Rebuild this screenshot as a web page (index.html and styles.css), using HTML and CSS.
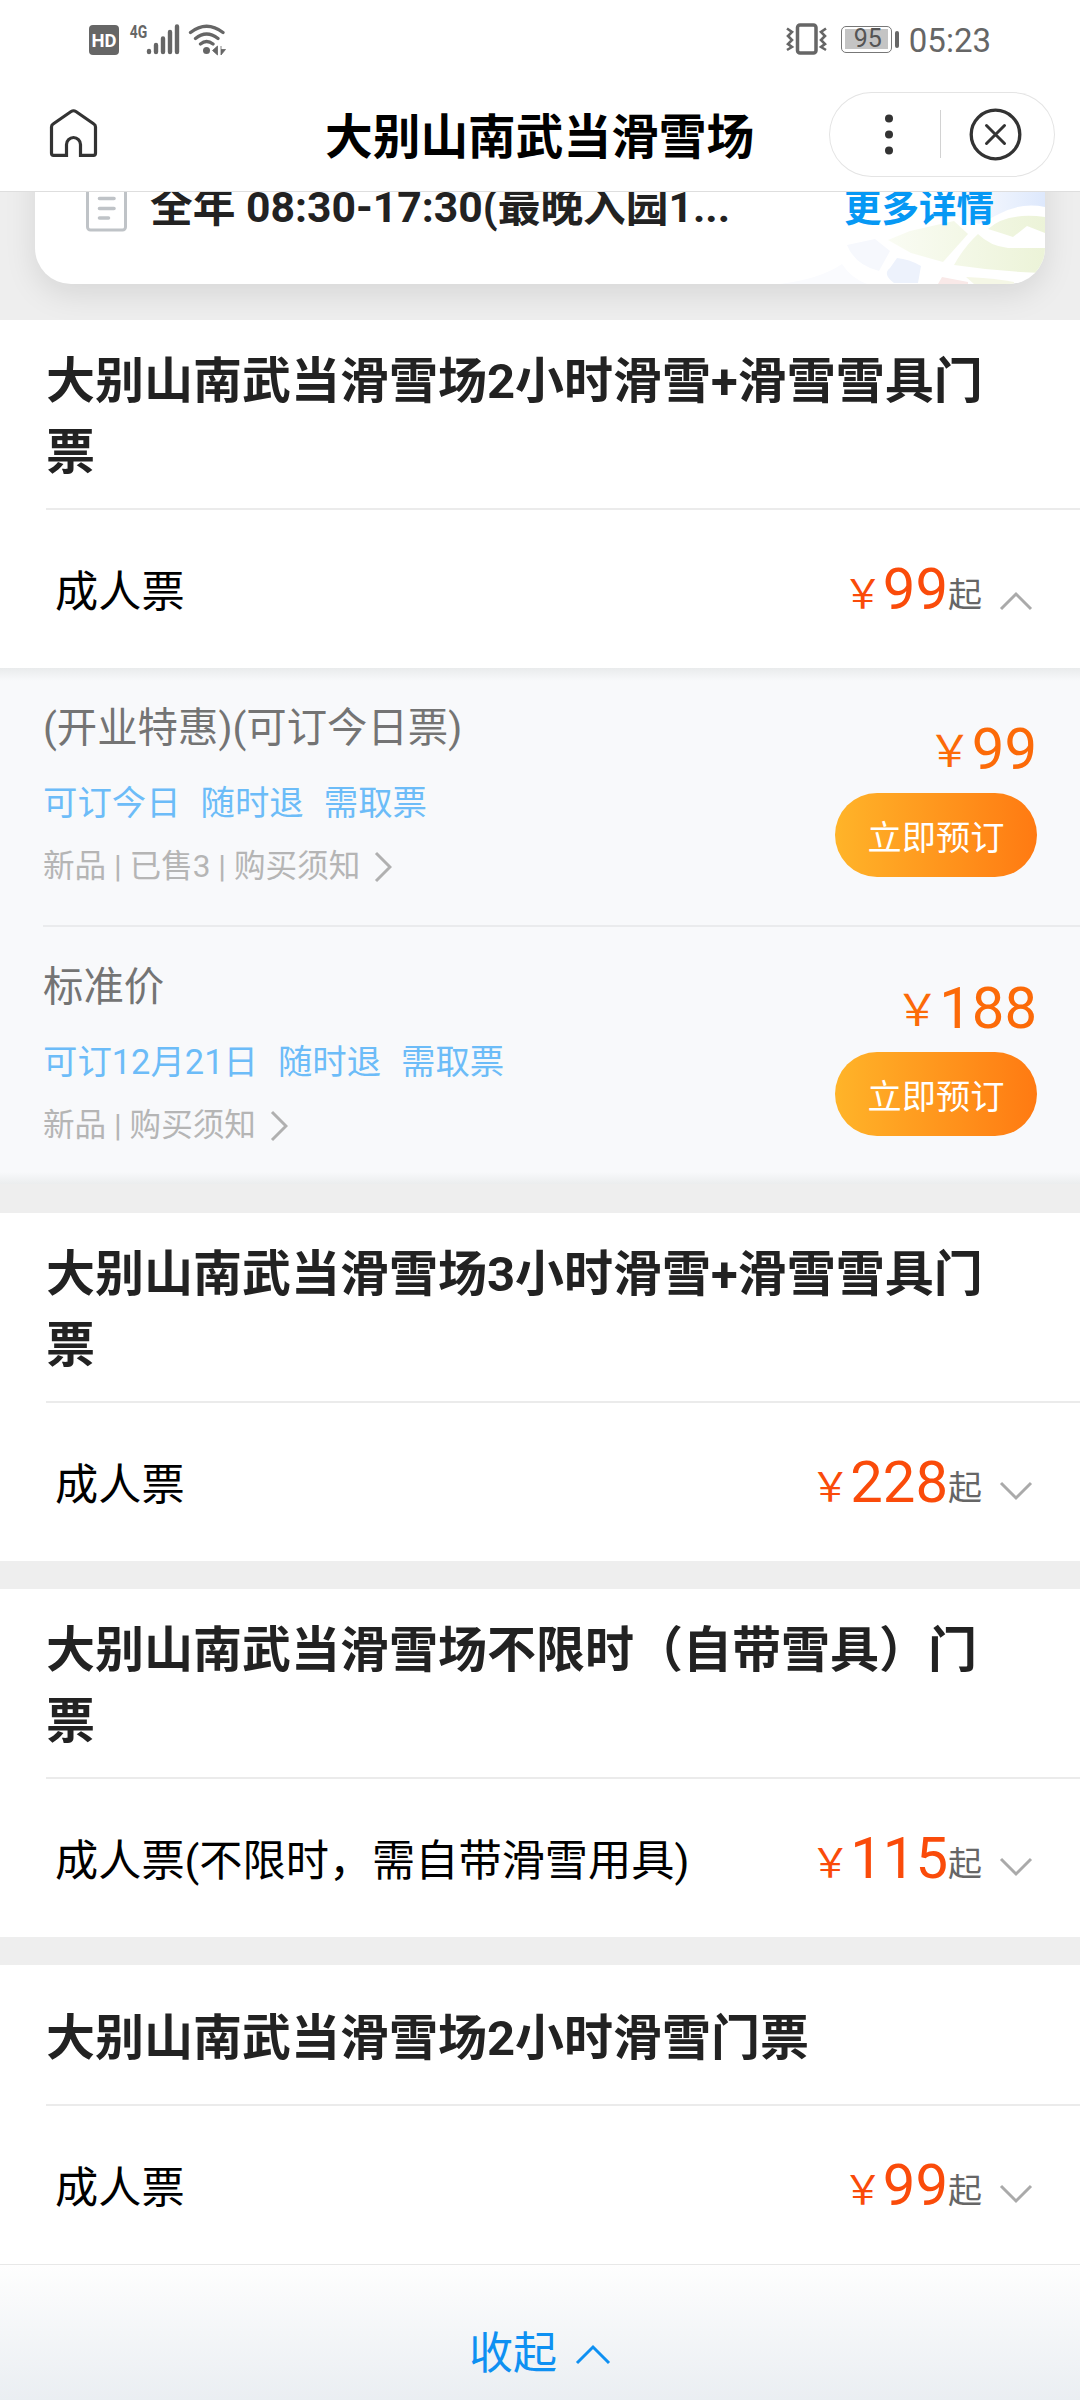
FILE: index.html
```
<!DOCTYPE html>
<html lang="zh-CN">
<head>
<meta charset="utf-8">
<title>大别山南武当滑雪场</title>
<link rel="stylesheet" href="styles.css">
</head>
<body>
<header class="header">
  <div class="status">
    <svg class="status-left" width="140" height="34" viewBox="88 22 140 34">
      <rect x="89" y="25" width="30" height="30" rx="4" fill="#666"/>
      <text x="104" y="46.500" class="hd" textLength="25" lengthAdjust="spacingAndGlyphs">HD</text>
      <text x="138.500" y="37.500" class="net" textLength="17.500" lengthAdjust="spacingAndGlyphs">4G</text>
      <g stroke="#666" stroke-width="4.400" stroke-linecap="round">
        <path d="M149 51v1M156 45v7M163 38.500v13.500M170 32v20M177 26.500v25.500"/>
      </g>
      <g fill="none" stroke="#666" stroke-width="3.300" stroke-linecap="round">
        <path d="M190.500 32.500q16-12.500 32.500 0M195.500 38.500q11-9 22.500 0M200.500 44q6-5 12.500 0"/>
      </g>
      <circle cx="206.500" cy="50.500" r="3.500" fill="#666"/>
      <path d="M212.500 50.500l5-4.500v9zM221 46v9l4.500-5.500h-4.500" fill="#666" stroke="#666" stroke-width=".8"/>
    </svg>
    <div class="status-right">
      <svg width="42" height="34" viewBox="784 22 42 34" fill="none" stroke="#666">
        <rect x="796.500" y="25" width="18.500" height="28" rx="2.500" stroke-width="3.500"/>
        <path d="M786 28.500l5 3.500-4 4 4 4-4 4 4 3-5 3M825 28.500l-5 3.500 4 4-4 4 4 4-4 3 5 3" stroke-width="2.600"/>
      </svg>
      <div class="battery"><span class="battery-level">95</span></div>
      <span class="clock">05:23</span>
    </div>
  </div>
  <div class="nav">
    <svg class="home" width="50" height="52" viewBox="48 107 50 52" fill="none" stroke="#333" stroke-width="3.200">
      <path d="M68.100 155.300H53.500q-2 0-2-2V127q0-2 1.600-3l18-12.500q2.400-1.500 4.800 0l18 12.500q1.600 1 1.600 3v26.300q0 2-2 2H78.900M66.500 156.900V144.500a7 7 0 0 1 14 0v12.400"/>
    </svg>
    <h1 class="nav-title">大别山南武当滑雪场</h1>
    <div class="capsule">
      <svg width="226" height="85" viewBox="829 92 226 85">
        <g fill="#333"><circle cx="889" cy="118.500" r="4"/><circle cx="889" cy="134.500" r="4"/><circle cx="889" cy="150.500" r="4"/></g>
        <path d="M940.500 110v48" stroke="#d2d2d2"/>
        <g fill="none" stroke="#333" stroke-width="3.300" stroke-linecap="round"><circle cx="995.500" cy="134.500" r="24.300"/><path d="M986.500 125.500l18 18M1004.500 125.500l-18 18" stroke-width="3"/></g>
      </svg>
    </div>
  </div>
</header>

<section class="hero">
  <div class="info">
    <svg class="map" width="265" height="92" viewBox="780 192 265 92">
      <defs>
        <linearGradient id="sky" x1="0" y1="0" x2="1" y2="0"><stop offset="0" stop-color="#e3ecfc" stop-opacity="0"/><stop offset="1" stop-color="#dde8fc"/></linearGradient>
        <linearGradient id="park" gradientUnits="userSpaceOnUse" x1="885" y1="0" x2="1045" y2="0"><stop offset="0" stop-color="#fafcf4"/><stop offset="1" stop-color="#ecf3d8"/></linearGradient>
      </defs>
      <path d="M940 192h105v15q-24-5-46 7l-20 10-30-10z" fill="url(#sky)"/>
      <g fill="url(#park)">
        <path d="M888 240l22-9 44-10 14 13-25 28-32-9z"/>
        <path d="M988 229q18-17 57-12v16l-18-7-14 11q-12-4-25-8z"/>
        <path d="M978 234q12 12 30 14h37v25q-44-1-91-8 10-18 24-31z"/>
      </g>
      <path d="M847 245l28-6 15 12-11 20q-24-6-32-26z" fill="#f6f8fd"/>
      <path d="M897 258q12 1 24 8l-3 17h-24q-12-9-4-15z" fill="#edf2fc"/>
      <path d="M842 264q9 14 25 20h-87q40-5 62-20z" fill="#fafbfe"/>
      <path d="M942 277l26 5v2h-30z" fill="#f9e9e8"/>
      <path d="M966 277q28 1 48 5v2h-40z" fill="#f5f7e6"/>
    </svg>
    <svg class="doc" width="42" height="60" viewBox="86 172 42 60" fill="none" stroke="#bfc3c7">
      <rect x="87.500" y="174" width="38" height="56" rx="3" stroke-width="3"/>
      <path d="M99.500 198.500h14.500M99.500 208.500h14.500M99.500 218h9" stroke-width="3.600" stroke-linecap="round"/>
    </svg>
    <span class="hours">全年 08:30-17:30(最晚入园1...</span>
    <a class="more">更多详情</a>
  </div>
</section>

<main>
  <section class="group">
    <h2 class="group-title">大别山南武当滑雪场2小时滑雪+滑雪雪具门票</h2>
    <div class="ticket">
      <span class="ticket-name">成人票</span>
      <span class="price"><i class="yen">￥</i>99<small class="from">起</small></span>
      <svg class="chev up" width="34" height="20" viewBox="0 0 34 20"><path d="M2 2l15 15 15-15"/></svg>
    </div>
    <div class="offers">
      <article class="offer">
        <div class="offer-info">
          <h3 class="offer-name">(开业特惠)(可订今日票)</h3>
          <p class="tags"><span>可订今日</span><span>随时退</span><span>需取票</span></p>
          <p class="meta">新品 | 已售3 | 购买须知<svg class="more-arrow" width="18" height="32" viewBox="0 0 18 32"><path d="M2 2l14 14L2 30"/></svg></p>
        </div>
        <div class="buy">
          <span class="price offer-price"><i class="yen">￥</i>99</span>
          <button class="book">立即预订</button>
        </div>
      </article>
      <article class="offer">
        <div class="offer-info">
          <h3 class="offer-name">标准价</h3>
          <p class="tags"><span>可订12月21日</span><span>随时退</span><span>需取票</span></p>
          <p class="meta">新品 | 购买须知<svg class="more-arrow" width="18" height="32" viewBox="0 0 18 32"><path d="M2 2l14 14L2 30"/></svg></p>
        </div>
        <div class="buy">
          <span class="price offer-price"><i class="yen">￥</i>188</span>
          <button class="book">立即预订</button>
        </div>
      </article>
    </div>
  </section>

  <section class="group">
    <h2 class="group-title">大别山南武当滑雪场3小时滑雪+滑雪雪具门票</h2>
    <div class="ticket">
      <span class="ticket-name">成人票</span>
      <span class="price"><i class="yen">￥</i>228<small class="from">起</small></span>
      <svg class="chev" width="34" height="20" viewBox="0 0 34 20"><path d="M2 2l15 15 15-15"/></svg>
    </div>
  </section>

  <section class="group">
    <h2 class="group-title">大别山南武当滑雪场不限时（自带雪具）门票</h2>
    <div class="ticket">
      <span class="ticket-name">成人票(不限时，需自带滑雪用具)</span>
      <span class="price"><i class="yen">￥</i>115<small class="from">起</small></span>
      <svg class="chev" width="34" height="20" viewBox="0 0 34 20"><path d="M2 2l15 15 15-15"/></svg>
    </div>
  </section>

  <section class="group">
    <h2 class="group-title single">大别山南武当滑雪场2小时滑雪门票</h2>
    <div class="ticket">
      <span class="ticket-name">成人票</span>
      <span class="price"><i class="yen">￥</i>99<small class="from">起</small></span>
      <svg class="chev" width="34" height="20" viewBox="0 0 34 20"><path d="M2 2l15 15 15-15"/></svg>
    </div>
  </section>
</main>

<footer class="fold">
  <span>收起</span>
  <svg width="36" height="21" viewBox="0 0 36 21"><path d="M2 19L18 3l16 16"/></svg>
</footer>
</body>
</html>
```
FILE: styles.css
```
* { box-sizing: border-box; margin: 0; padding: 0; }
body {
  width: 1080px;
  height: 2400px;
  overflow: hidden;
  background: #eee;
  font-family: Roboto, "Noto Sans CJK SC", sans-serif;
  color: #222;
}
svg { display: block; flex: none; }

/* header */
.header { height: 192px; background: #fff; border-bottom: 1px solid #dedede; }
.status { height: 80px; padding: 22px 89px 0 88px; display: flex; justify-content: space-between; }
.hd { font-size: 19px; font-weight: 700; fill: #fff; text-anchor: middle; }
.net { font-size: 18.5px; font-weight: 700; fill: #666; text-anchor: middle; }
.status-right { display: flex; height: 34px; }
.battery {
  position: relative;
  width: 51px;
  height: 27px;
  margin: 4px 17px 0 14px;
  padding: 2px 3px;
  border: 1.5px solid #777;
  border-radius: 5px;
}
.battery::after {
  content: "";
  position: absolute;
  right: -8px;
  top: 4px;
  width: 4px;
  height: 17px;
  border-radius: 2px;
  background: #666;
}
.battery-level {
  display: block;
  width: 43px;
  height: 20px;
  padding-left: 3px;
  background: #c4c4c4;
  color: #555;
  font-size: 25px;
  line-height: 20px;
  text-align: center;
}
.clock { font-size: 33px; line-height: 37px; color: #666; }
.nav { height: 111px; padding: 12px 25px 0 48px; display: flex; justify-content: space-between; }
.home { margin-top: 15px; }
.nav-title { margin-left: 227px; font-size: 47.700px; line-height: 85px; font-weight: 700; color: #000; padding-top: 4px; height: 85px; flex: 1; white-space: nowrap; }
.capsule { width: 226px; height: 85px; border-radius: 43px; box-shadow: inset 0 0 0 1px #e4e4e4; }

/* opening hours card */
.hero { height: 128px; overflow: hidden; }
.info {
  position: relative;
  height: 152px;
  margin: -60px 35px 0;
  padding: 40px 51px 0 51px;
  display: flex;
  background: #fff;
  border-radius: 36px;
  box-shadow: 0 10px 32px rgba(0, 0, 0, .1);
}
.map { position: absolute; right: 0; bottom: 0; border-bottom-right-radius: 36px; }
.doc { margin-right: 22px; }
.hours { position: relative; flex: 1; font-size: 42.700px; font-weight: 700; line-height: 50px; padding-top: 10px; white-space: nowrap; }
.more { position: relative; font-size: 37.500px; font-weight: 700; line-height: 50px; padding-top: 11px; color: #0698f4; }

/* ticket groups */
.group { background: #fff; margin-bottom: 28px; }
.group:first-child { margin-bottom: 29px; }
.group:last-child { margin-bottom: 0; padding-top: 1px; }
.group-title {
  height: 190px;
  margin-left: 46px;
  padding: 26px 80px 0 0;
  border-bottom: 2px solid #ebebeb;
  font-size: 49px;
  line-height: 71px;
  font-weight: 700;
}
.group-title.single { height: 140px; padding-top: 37px; }
.ticket { height: 158px; padding: 0 47px 0 55px; display: flex; align-items: center; }
.ticket-name { flex: 1; padding-top: 7px; font-size: 43.200px; line-height: 60px; color: #000; }
.price { display: flex; align-items: baseline; font-size: 58px; line-height: 68px; color: #fa4b0a; }
.ticket .price { padding-top: 8px; }
.yen { font-style: normal; font-size: 40px; position: relative; top: -1px; }
.from { font-size: 34px; color: #666; position: relative; top: -2px; }
.chev { margin: 17px 0 0 17px; fill: none; stroke: #aaa; stroke-width: 3; }
.chev.up { margin-top: 24px; transform: scaleY(-1); }

/* expanded offers */
.offers {
  height: 516px;
  background: linear-gradient(#e9ebec, #f8f9fb 13px, #f8f9fb 504px, #ebedee);
}
.offer { height: 257px; margin-left: 43px; padding-right: 43px; display: flex; justify-content: space-between; }
.offer + .offer { height: 259px; border-top: 2px solid #eaebed; }
.offer-info { padding-top: 33px; }
.offer-name { font-size: 40.400px; font-weight: 400; line-height: 56px; color: #747474; }
.tags { display: flex; gap: 20px; margin-top: 22px; font-size: 34.400px; line-height: 48px; color: #6cbcf8; }
.meta { display: flex; align-items: center; margin-top: 16px; font-size: 31.600px; line-height: 48px; color: #b5b5b5; }
.more-arrow { margin-left: 14px; fill: none; stroke: #b0b0b0; stroke-width: 3; }
.buy { display: flex; flex-direction: column; align-items: flex-end; padding-top: 47px; }
.offer-price { color: #fc6a08; }
.offer-price .yen { font-size: 44px; top: -2px; }
.book {
  width: 202px;
  height: 84px;
  margin-top: 5px;
  padding-bottom: 1px;
  border: 0;
  border-radius: 42px;
  background: linear-gradient(90deg, #ffb429, #ff7a12);
  color: #fff;
  font-family: inherit;
  font-size: 34.200px;
}

/* collapse bar */
.fold {
  height: 137px;
  padding-top: 42px;
  display: flex;
  align-items: center;
  justify-content: center;
  gap: 18px;
  border-top: 1px solid #e8e8e8;
  background: linear-gradient(#fefefe, #eaeef2);
  color: #0e90f2;
  font-size: 44px;
  line-height: 60px;
}
.fold path { fill: none; stroke: currentColor; stroke-width: 3; }
```
